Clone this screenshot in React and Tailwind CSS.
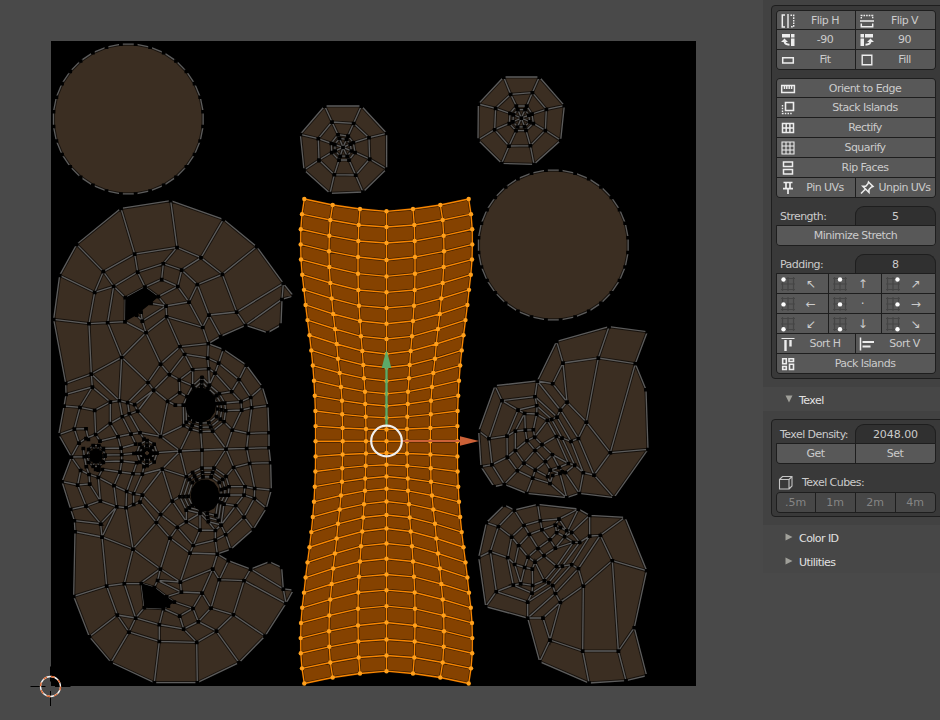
import React from "react";

// Mesh strings hold polylines separated by ";" in a local frame three times finer than the canvas.
const parse = (ox, oy, text) =>
  text
    .split(";")
    .map((line) =>
      line
        .trim()
        .split(/\s+/)
        .map((p) => {
          const [x, y] = p.split(",").map(Number);
          return [+(ox + x / 3).toFixed(2), +(oy + y / 3).toFixed(2)];
        })
    );

const toD = (line, close) => "M" + line.map((p) => p.join(" ")).join("L") + (close ? "Z" : "");

const ring = (cx, cy, rx, ry, n, phase = 0) =>
  Array.from({ length: n }, (_, i) => {
    const a = ((i + phase) / n) * Math.PI * 2;
    return [+(cx + rx * Math.cos(a)).toFixed(2), +(cy + ry * Math.sin(a)).toFixed(2)];
  });

const web = (rings) => {
  const loops = rings.map((r) => [...r, r[0]]);
  const spokes = rings[0].map((_, i) => rings.map((r) => r[i]));
  return [...loops, ...spokes];
};

const headOutline = [
  ...parse(45, 190, "228,55 377,32 535,88 635,170 715,280 745,318 711,328 708,405 668,428 602,406 527,439 490,461")[0],
  ...parse(45, 340, "535,28 604,75 652,140 669,197 672,278 672,323 677,368 679,450 664,505 625,568")[0],
  ...parse(45, 520, "557,88 517,102 550,122 617,147 673,125 710,142 715,207 745,210 723,250 660,348 582,428 457,488 328,488 198,427 133,350 86,229 90,35")[0],
  ...parse(45, 340, "88,542 77,508 51,425 79,351 41,284 57,198 63,163 62,130")[0],
  ...parse(45, 190, "26,388 44,256 95,163")[0],
];

const headHoles = [
  ...parse(45, 190, "241,323 300,291 340,320 320,338 290,362 275,375 240,395"),
  ...parse(45, 520, "289,190 328,202 365,230 388,246 370,258 355,266 298,263"),
  ring(200.7, 405, 15.5, 17.5, 14),
  ring(205, 495.5, 14.5, 16.5, 14),
  ring(96, 456, 6, 7, 10),
];

// Loops around the two large eye openings follow the vertices of the surrounding faces.
const eyeA = parse(
  45,
  340,
  "539,189 523,161 493,135 471,112 443,137 426,170 415,195 416,256 437,267 467,275 503,273 537,245 542,212 539,189"
)[0];
const eyeB = parse(
  45,
  340,
  "552,440 543,409 507,384 471,384 443,397 424,410 405,470 424,510 465,520 490,545 528,555 537,492 550,465 552,440"
)[0];
const inward = (loop, cx, cy, k) => loop.map(([x, y]) => [+(cx + (x - cx) * k).toFixed(2), +(cy + (y - cy) * k).toFixed(2)]);
const eyeLoops = (loop, cx, cy) => {
  const mid = inward(loop, cx, cy, 0.84);
  const near = inward(loop, cx, cy, 0.68);
  return [loop, mid, near, ...loop.map((p, i) => [p, mid[i], near[i]])];
};

const headEdges = [
  ...parse(
    45,
    190,
    `228,55 269,192 278,246 300,291;377,32 396,172 355,221 350,268;535,88 468,203 410,240 398,289 340,320;
635,170 532,253 457,284 432,336 363,348;715,280 575,366 492,375;715,280 711,328 602,406;
95,163 175,245 206,289 241,323;44,256 149,307 206,289;175,245 149,307 132,401 139,552;
175,245 269,192 396,172 468,203 532,253 575,366 602,406;206,289 278,246 355,221 410,240 457,284 492,375 527,439;
300,291 350,268 398,289 432,336 473,412 490,461;26,388 132,401 188,398 240,395;206,289 188,398 230,502;
240,395 303,428 365,380 473,412 492,375;363,348 365,380 405,470 490,461;340,320 363,348 292,393 288,366;
318,340 363,348;292,393 303,428;292,393 275,375;240,395 241,323 300,291 340,320;303,428 230,502;303,428 347,522;
405,470 419,493 488,504 490,461;405,470 347,522;419,493 373,553`
  ),
  ...parse(
    45,
    340,
    `230,52 139,102 62,130;139,102 142,141 63,163;142,141 105,202 57,198;139,102 223,182;
142,141 196,186 223,182 248,188 269,194;230,52 223,182;230,52 309,127;309,127 347,72 373,103 326,150;
309,127 326,150 269,194;309,127 248,188;269,194 278,213;248,188 253,221;326,150 278,213;326,150 368,184 391,195 415,195;
373,103 403,120 443,137;488,54 521,69 582,119 617,172 652,140;521,69 535,28;582,119 604,75;620,203 669,197;
419,43 443,89 491,86 510,99 560,155 588,185 590,210;443,89 443,137;403,120 404,158 426,170;403,120 443,89;
488,54 491,86 493,135;521,69 510,99 493,135;582,119 560,155 523,161;617,172 588,185 539,189;620,203 590,210 542,212;
617,172 620,203 610,280 605,325 614,370 629,445 628,475;590,210 562,270 543,327 566,382 600,440 597,465;
610,280 672,278;605,325 672,323;614,370 677,368;629,445 679,450;628,475 664,505;600,440 629,445;
368,184 404,158;368,184 347,289 416,256 437,267;278,213 347,289 405,333 352,387;405,333 437,267;
405,333 471,330 467,275;471,330 543,327 605,325;471,330 471,384;543,327 503,273;543,327 507,384;
562,270 537,245;562,270 610,280;566,382 543,409;566,382 614,370;405,333 424,410 443,397;352,387 424,410;
352,387 382,483 405,470;405,333 336,338;105,202 149,211 196,186;149,211 152,283;105,202 88,267 41,284;
88,267 123,266 130,298;88,267 102,309;196,186 196,250 152,283;196,250 232,230 278,213;223,182 232,230 258,282;
253,221 285,278;196,250 219,290;152,283 165,303 219,290 258,282 285,278 347,289;258,282 272,312;285,278 297,297;
79,351 118,350 150,350;219,290 228,324 230,344 230,363 225,396;175,325 228,324 272,312;180,345 230,344 267,340;
172,365 230,363 275,368;172,388 225,396 264,401 292,402 352,387;275,368 264,401;297,380 292,402;102,309 79,351 107,391 132,403;
107,391 98,435 51,425;98,435 134,432 132,403;134,432 166,483 160,412 207,437 225,396;
207,437 215,500 166,483 123,498 77,508;98,435 123,498 167,551 88,542;215,500 243,503 245,454 207,437;
245,454 264,401;245,454 266,461 292,465 352,387;266,461 292,402;266,461 266,493 243,503;266,493 285,486 292,465;
292,465 347,523;285,486 334,547;347,523 382,483;215,500 167,551;382,483 424,545;347,523 334,547;347,523 397,562;
597,465 550,465;600,440 552,440;597,465 572,497 597,531 625,568;572,497 537,492;572,497 528,555;
597,465 628,475 597,531;424,545 424,510;424,545 465,520;102,309 123,295 152,283;115,325 118,350 124,380;
124,380 132,403 160,412 172,388;160,390 152,388`
  ),
  ...parse(
    45,
    520,
    `90,35 171,51 264,87;167,12 171,51 185,198;171,51 215,-40;264,87 334,7;264,87 243,-37;264,87 238,191;
264,87 346,147;334,7 375,54 397,22;375,54 346,147 289,188;397,22 445,76 435,99 406,186;375,54 435,99 517,102;
445,76 511,60 517,102;511,60 542,44 557,88;397,22 424,5 465,30 445,76;465,30 511,31 528,15;511,31 511,60;
528,15 542,44 597,-9;465,30 465,-20;511,31 490,5;517,102 503,147 406,186 346,147;338,181 409,216 471,219 503,147;
503,147 523,179 597,182 617,147;550,122 523,179 498,264 565,284 597,182 723,250;617,147 715,207 723,250;
406,186 409,216;328,202 338,181 346,147;365,230 409,216;388,246 444,265 471,219 498,264;338,181 406,186;
444,265 460,305 514,333 565,284 660,348;498,264 460,305 416,327 455,367 514,333 582,428;
355,266 404,288 416,327 343,314 355,266;404,288 444,265;298,263 272,294 343,314 343,364 455,367 457,488;
343,364 328,488;343,364 252,336 198,427;272,294 217,285 252,336 272,294 238,191;217,285 133,350;217,285 185,198;
86,229 185,198 238,191 289,190 298,263 355,266;289,190 328,202 365,230 370,258 355,266;365,230 388,246`
  ),
  ...eyeLoops(eyeA, 200.7, 405),
  ...eyeLoops(eyeB, 205, 495.5),
  ...web([ring(96, 456, 5, 6, 10), ring(96, 456, 9, 11, 10)]),
  ...web([ring(147, 453, 4, 4, 8), ring(147, 453, 7, 8, 8), ring(147, 453, 10, 12.5, 8)]),
];

const rightTopOutline = parse(470, 320, "260,64 417,20 532,35 496,131 528,209 534,388 432,533 328,520 290,533 170,520 103,493 72,500 33,440 26,333 75,197 202,183")[0];
const rightTopEdges = parse(
  470,
  320,
  `260,64 279,129 248,191;202,183 248,191 291,246 349,306 421,398;417,20 385,114 349,306;
279,129 385,114 496,131 421,398;279,129 291,246 271,270;349,306 325,355 372,465;421,398 534,388;
421,398 372,465 432,533;202,183 271,270 325,355;202,183 195,230 201,257 200,282 232,301;75,197 96,242 195,230;
96,242 57,356 26,333;96,242 144,270 201,257;144,270 164,280 200,282;144,270 111,348 57,356;
111,348 136,333 166,330 190,329;164,280 136,333;164,280 166,330 171,362;200,282 190,329 194,351;111,348 112,411 66,434 57,356;
66,434 33,440;66,434 103,493;112,411 142,452 103,493;136,333 136,391 112,411;
136,391 171,362 194,351 232,301 245,298 261,291 271,270;136,391 162,429 195,391 171,362;195,391 216,374 194,351;
216,374 259,349 276,354 303,364 325,355;216,374 247,404 226,425 195,391;162,429 142,452 188,474 196,450 162,429;
196,450 226,425 241,450 233,470 196,450;188,474 240,490 233,470;188,474 170,520;240,490 290,533;
247,404 295,430 314,435;247,404 267,442 277,455 286,458;295,430 267,442 241,450;200,257 245,298;195,230 261,291;
232,301 259,349 295,430;245,298 276,354 314,435 340,458 372,465;261,291 303,364 340,458 328,520;
314,435 286,458 328,520;270,460 290,533;248,466 270,460 241,450;240,490 248,466`
);

const rightLowOutline = parse(470, 495, "103,30 133,45 203,28 325,42 359,61 465,67 530,227 493,398 530,542 468,557 357,564 209,500 173,369 47,335 26,187 49,83")[0];
const rightLowEdges = parse(
  470,
  495,
  `49,83 85,95 133,45 162,91 211,77 203,28;85,95 61,170 26,187;85,95 125,126 162,91 178,118 216,104 211,77 267,72 325,42;
61,170 113,188 125,126 146,152 178,118 204,160 240,134 216,104 256,90 267,72;61,170 79,290 47,335;
79,290 173,321 173,369;113,188 130,270 79,290;113,188 134,208 146,152 174,186 204,160 222,182 256,159 240,134 260,113 256,90;
134,208 164,217 174,186 195,201 222,182 260,214 310,142;134,208 152,266 164,217 187,222 195,201 223,257;
187,222 188,271 152,266 130,270 186,294 188,271 223,257 236,263 248,272 256,295 271,322;256,159 310,142 329,142;
260,214 277,213 305,209 325,221 340,273;223,257 260,214;236,263 277,213 329,142 359,123 391,121;
248,272 305,209 359,123;256,295 325,221 391,121 427,197 340,273 271,322;186,294 236,263;173,321 186,294;
173,321 248,272;173,369 256,295;173,369 219,369 271,322 240,435 219,369;240,435 209,500;
240,435 338,468 340,273;338,468 357,564;338,468 445,468 468,557;445,468 427,197 530,227;445,468 493,398;
391,121 465,67;359,123 359,61;359,61 305,112;310,142 284,125 325,42;284,125 260,113 271,97 290,107 305,112 329,142;
267,72 290,107;256,159 284,125 305,112;271,97 256,90`
);

const webRings = (ox, oy, cx, cy, outer, mid, inner) => {
  const rings = [outer, mid, inner].map((t) => parse(ox, oy, t)[0]);
  const c = [ox + cx / 3, oy + cy / 3];
  const core = rings[2].map(([x, y]) => [c[0] + (x - c[0]) * 0.7, c[1] + (y - c[1]) * 0.7]);
  return { outline: rings[0], edges: web([...rings, core, rings[0].map(() => c)]) };
};
const webA = webRings(290, 90, 159, 172,
  "104,48 214,48 290,130 290,237 219,306 120,310 42,240 31,133",
  "126,96 191,100 237,143 239,207 197,255 133,254 87,210 85,146",
  "144,134 174,138 190,158 195,187 177,210 147,210 125,187 124,160");
const webB = webRings(470, 60, 154, 174,
  "101,51 208,51 283,137 272,241 192,313 95,310 24,240 25,132",
  "122,103 187,98 229,148 226,211 181,257 117,258 74,209 77,145",
  "139,138 170,138 186,162 190,190 168,211 138,212 118,190 120,160");

// Upper half of the selected strip: left-side columns, mirrored around both axes.
const colX = [
  [304.3, 302, 300.8, 300.7, 301, 302.2, 304, 305.6, 307.5, 309.5, 311.3, 312.8, 314, 314.8, 315.4, 315.6, 315.6],
  [332.7, 330.3, 329.3, 329, 329.3, 330.3, 331.7, 333.2, 335, 336.7, 338, 339.7, 341, 342, 342.2, 342.6, 342.7],
  [360, 358.7, 358.3, 358, 358, 358.3, 359, 360, 361, 362.3, 363.3, 364, 365, 365.2, 365.7, 366, 366],
  Array(17).fill(386.5),
];
const colY = [
  Array.from({ length: 17 }, (_, i) => 199 + i * 15.14),
  [205, 220, 235.7, 251.3, 267, 283, 298.5, 314, 329, 344, 358.7, 373, 387, 400.7, 414.3, 428, 441.2],
  [209, 225, 241, 257, 273.7, 290, 305.7, 321, 336.3, 351, 365, 378.3, 391.7, 404, 416.7, 429, 441.2],
  [211.3, 227, 243, 260, 276.4, 292.3, 308, 323.7, 339, 354, 367.5, 381, 393.7, 406, 417.7, 429.5, 441.2],
];
const strip = Array.from({ length: 33 }, (_, r) =>
  Array.from({ length: 7 }, (_, c) => {
    const cc = c > 3 ? 6 - c : c;
    const rr = r > 16 ? 32 - r : r;
    const x = colX[cc][rr];
    const y = colY[cc][rr];
    return [c > 3 ? 773 - x : x, r > 16 ? 882.5 - y : y];
  })
);
const stripEdges = [...strip, ...Array.from({ length: 7 }, (_, c) => strip.map((r) => r[c]))];
const stripOutline = [...strip[0], ...strip.map((r) => r[6]), ...[...strip[32]].reverse(), ...strip.map((r) => r[0]).reverse()];

const unique = (lines) => [...new Map(lines.flat().map((p) => [p.map(Math.round).join(), p])).values()];

function Island({ outline, edges = [], holes = [] }) {
  const lines = [[...outline, outline[0]], ...edges];
  const d = lines.map((l) => toD(l)).join("");
  return (
    <g>
      <path d={toD(outline, true)} fill="#3b2e22" />
      <path d={d} fill="none" stroke="#000" strokeOpacity=".6" strokeWidth="3.2" />
      <path d={d} fill="none" stroke="#5c5c5c" strokeWidth="1.3" />
      {holes.map((h, i) => <path key={i} d={toD(h, true)} fill="#000" />)}
      <path d={unique(lines).map(([x, y]) => `M${x - 1.9} ${y - 1.7}h3.8v3.6h-3.8z`).join("")} fill="#000" />
    </g>
  );
}

function Strip() {
  const d = stripEdges.map((l) => toD(l)).join("");
  return (
    <g>
      <path d={toD(stripOutline, true)} fill="#854200" />
      <path d={d} fill="none" stroke="#1c0e00" strokeOpacity=".65" strokeWidth="2.8" />
      <path d={d} fill="none" stroke="#f98600" strokeWidth="1.35" />
      {strip.flat().map(([x, y], i) => <circle key={i} cx={x} cy={y} r="2.2" fill="#ffa01c" />)}
    </g>
  );
}

function Canvas() {
  return (
    <svg width="763" height="720" viewBox="0 0 763 720" className="block shrink-0">
      <rect x="51" y="41" width="645" height="645" fill="#000" />
      <Island outline={ring(128.3, 119, 75.2, 75.2, 32, 0.5)} />
      <Island outline={ring(553.3, 245, 75.2, 75.2, 32, 0.5)} />
      <Island {...webA} />
      <Island {...webB} />
      <Island outline={headOutline} edges={headEdges} holes={headHoles} />
      <Island outline={rightTopOutline} edges={rightTopEdges} />
      <Island outline={rightLowOutline} edges={rightLowEdges} />
      <Strip />
      <path d="M386.5 426V367" stroke="#5cab68" strokeWidth="2.4" />
      <path d="M386.5 349.5L391.3 368H381.7Z" fill="#5cab68" />
      <path d="M402 441H461" stroke="#cc6137" strokeWidth="2" />
      <path d="M479 441L460 445.8V436.2Z" fill="#cc6137" />
      <circle cx="386.5" cy="441" r="15.3" fill="none" stroke="#f0f0f0" strokeWidth="2.2" />
      <path d="M50.5 666.5V681.5M50.5 691V706M30.5 686.5H45.5M55 686.5H70.5" stroke="#000" />
      <circle cx="50.5" cy="686.5" r="10" fill="none" stroke="#f4f4f4" strokeWidth="1.3" />
      <circle cx="50.5" cy="686.5" r="10" fill="none" stroke="#e0662c" strokeWidth="1.3" strokeDasharray="3.93" />
    </svg>
  );
}

const icons = {
  flipH: <><path d="M5 2H2.300v12H5" strokeWidth="1.500" /><path d="M8 1v14" strokeWidth="1.400" /><path d="M10.500 2.300h3.200v11.400h-3.200" strokeDasharray="1.600 1" strokeWidth="1.400" /></>,
  flipV: <><path d="M2.300 5.500V2.500h11.400v3" strokeDasharray="1.600 1" strokeWidth="1.400" /><path d="M1 8h14" strokeWidth="1.400" /><path d="M2.300 10.500v3.200h11.400v-3.200" strokeWidth="1.500" /></>,
  rotL: <><path d="M2 2h8v3.500H2zM11 2h3.500v3.500H11zM11 6.500h3.500v7.500H11zM1 10l3.500-3.500L8 10z" fill="currentColor" stroke="none" /><path d="M4.500 9q0 3.500 5 3.700" strokeWidth="2" /></>,
  rotR: <><path d="M1.500 2h3.500v3.500H1.500zM6 2h8v3.500H6zM1.500 6.500h3.500v7.500H1.500zM8 10l3.500-3.500L15 10z" fill="currentColor" stroke="none" /><path d="M11.500 9q0 3.500-5 3.700" strokeWidth="2" /></>,
  fit: <path d="M2.700 5.700h10.600v5.200H2.700z" strokeWidth="1.500" />,
  fill: <path d="M3.200 3.200h9.600v9.600H3.200z" strokeWidth="1.400" />,
  ruler: <path d="M1.700 4.500h12.700v7H1.700zM4.500 5v3M6.800 5v3M9.200 5v3M11.600 5v3" strokeWidth="1.500" />,
  stack: <><path d="M5.500 2.500h8v8h-8z" strokeWidth="1.600" /><path d="M2.500 5v8.500H12" strokeDasharray="1.500 1.200" strokeWidth="1.400" /></>,
  rectify: <path d="M2.500 3.500h11v9h-11zM2.500 8h11M6.200 3.500v9M9.900 3.500v9" strokeWidth="1.500" />,
  squarify: <path d="M2 2h12v12H2zM2 6h12M2 10h12M6 2v12M10 2v12" strokeWidth="1.100" />,
  rip: <path d="M3.500 2h9v4.500h-9zM3.500 9.500h9V14h-9z" strokeWidth="1.500" />,
  pin: <path d="M3.500 2.500h9M6 3v5M10 3v5M3 8.700h10M8 8.700V14" strokeWidth="1.700" />,
  unpin: <path d="M9.500 2l4.500 4.500-1.500.5L10 9.500v3L3.800 6.300h3L9 3.700zM6 9.500L2 13.500" strokeWidth="1.500" />,
  sortH: <><path d="M1.500 2.500h13" /><path d="M5.500 4v11M10.500 4v6.500" strokeWidth="2.400" /></>,
  sortV: <><path d="M1.500 1.500v13" strokeWidth="1.500" /><path d="M3.500 6H15M3.500 10.500H11.500" strokeWidth="2.200" /></>,
  pack: <path d="M2.700 2.700h3.600v5H2.700zM9 2.700h4.500v2.800H9zM2.700 10.500h3.600v3H2.700zM9.500 8.300h4v5.200h-4z" strokeWidth="1.600" />,
  cube: <path d="M1.500 4.500h9.500v9.500h-9.500zM1.500 4.500L4.500 1.500h9.500v9.500L11 14M11 4.500L14 1.500" strokeWidth="1.100" />,
};

function Icon({ name, className = "text-[#ededed]" }) {
  return (
    <svg width="16" height="16" viewBox="0 0 16 16" fill="none" stroke="currentColor" strokeWidth="1.2" className={`shrink-0 ${className}`}>
      {icons[name]}
    </svg>
  );
}

function Button({ icon, children, className = "" }) {
  return (
    <div className={`flex h-[19px] min-w-0 items-center bg-[#585858] ${className}`}>
      {icon && <span className="ml-[3px] flex w-4 shrink-0"><Icon name={icon} /></span>}
      <span className="flex-1 whitespace-nowrap pr-px text-center">{children}</span>
    </div>
  );
}

function Group({ children, className = "" }) {
  return <div className={`flex w-[160px] flex-col gap-px overflow-hidden rounded-[4px] border border-[#1e1e1e] bg-[#1e1e1e] ${className}`}>{children}</div>;
}

const Pair = ({ children }) => <div className="grid grid-cols-[78px_79px] gap-px">{children}</div>;

function Field({ label, value }) {
  return (
    <div className="flex h-[19px] w-[160px] items-center">
      <span className="w-[79px] whitespace-nowrap pl-1 pt-[2px]">{label}</span>
      <span className="h-[19px] flex-1 rounded-t-[9px] border border-b-0 border-[#1e1e1e] bg-[#303030] text-center leading-[19px] tracking-[-0.05px]">{value}</span>
    </div>
  );
}

function Anchor({ col, row, arrow }) {
  return (
    <div className="flex h-[19px] items-center bg-[#585858]">
      <svg width="16" height="16" viewBox="0 0 16 16" className="ml-[3px] shrink-0">
        <path d="M2.500 1v14M8 1v14M13.500 1v14M1 2.500h14M1 8h14M1 13.500h14" stroke="#454545" strokeWidth="1.200" fill="none" />
        <circle cx={3.5 + col * 4.5} cy={3.5 + row * 4.9} r="2.2" fill="#fff" />
      </svg>
      <span className="w-[29px] text-center text-[12px]">{arrow}</span>
    </div>
  );
}

function Header({ open, children }) {
  return (
    <div className="flex h-6 items-center pl-[22px] text-[#e2e2e2]">
      <svg width="8" height="8" viewBox="0 0 8 8" className="mr-[6px]">
        <path d={open ? "M.5 .5h7L4 7.500z" : "M.5 .5l7 3.500L.5 7.500z"} fill="#a0a09a" />
      </svg>
      <span className="pt-[3px]">{children}</span>
    </div>
  );
}

export default function App() {
  const arrows = ["↖", "↑", "↗", "←", "·", "→", "↙", "↓", "↘"];
  return (
    <div className="flex h-[720px] w-[940px] overflow-hidden bg-[#494949] font-['DejaVu_Sans',sans-serif] text-[11px] leading-none tracking-[-0.55px] text-[#cbcbcb]">
      <Canvas />
      <div className="h-[573px] w-[177px] shrink-0 overflow-hidden bg-[#474747]">
        <div className="h-[387px] bg-[#424242] pl-2 pt-[5px]">
          <div className="h-[374px] w-[180px] rounded-[4px] border border-[#1e1e1e] bg-[#393939] pl-1 pt-1">
            <Group>
              <Pair><Button icon="flipH" className="!h-[18px] pt-px">Flip H</Button><Button icon="flipV" className="!h-[18px] pt-px">Flip V</Button></Pair>
              <Pair><Button icon="rotL">-90</Button><Button icon="rotR">90</Button></Pair>
              <Pair><Button icon="fit">Fit</Button><Button icon="fill">Fill</Button></Pair>
            </Group>
            <Group className="mt-2">
              <Button icon="ruler" className="!h-[18px] pt-px">Orient to Edge</Button>
              <Button icon="stack">Stack Islands</Button>
              <Button icon="rectify">Rectify</Button>
              <Button icon="squarify">Squarify</Button>
              <Button icon="rip">Rip Faces</Button>
              <Pair><Button icon="pin">Pin UVs</Button><Button icon="unpin">Unpin UVs</Button></Pair>
            </Group>
            <div className="mt-2">
              <Field label="Strength:" value="5" />
              <Group className="rounded-t-none"><Button>Minimize Stretch</Button></Group>
            </div>
            <div className="mt-2">
              <Field label="Padding:" value="8" />
              <Group className="rounded-t-none">
                <div className="grid grid-cols-[51px_52px_53px] gap-px">
                  {arrows.map((a, i) => <Anchor key={i} col={i % 3} row={Math.floor(i / 3)} arrow={a} />)}
                </div>
                <Pair><Button icon="sortH">Sort H</Button><Button icon="sortV">Sort V</Button></Pair>
                <Button icon="pack">Pack Islands</Button>
              </Group>
            </div>
          </div>
        </div>
        <Header open>Texel</Header>
        <div className="h-[114px] bg-[#424242] pl-2 pt-2">
          <div className="h-[98px] w-[180px] rounded-[4px] border border-[#1e1e1e] bg-[#393939] pl-1 pt-1">
            <Field label="Texel Density:" value="2048.00" />
            <Group className="rounded-t-none"><Pair><Button>Get</Button><Button>Set</Button></Pair></Group>
            <div className="flex h-[28px] items-center pl-[2px] pt-[9px]">
              <Icon name="cube" className="text-[#c4c4c4]" />
              <span className="ml-2">Texel Cubes:</span>
            </div>
            <Group className="text-[#858585]">
              <div className="grid grid-cols-[38px_39px_39px_39px] gap-px">
                {[".5m", "1m", "2m", "4m"].map((t) => <Button key={t} className="!bg-[#474747] tracking-normal">{t}</Button>)}
              </div>
            </Group>
          </div>
        </div>
        <Header>Color ID</Header>
        <Header>Utilities</Header>
      </div>
    </div>
  );
}
